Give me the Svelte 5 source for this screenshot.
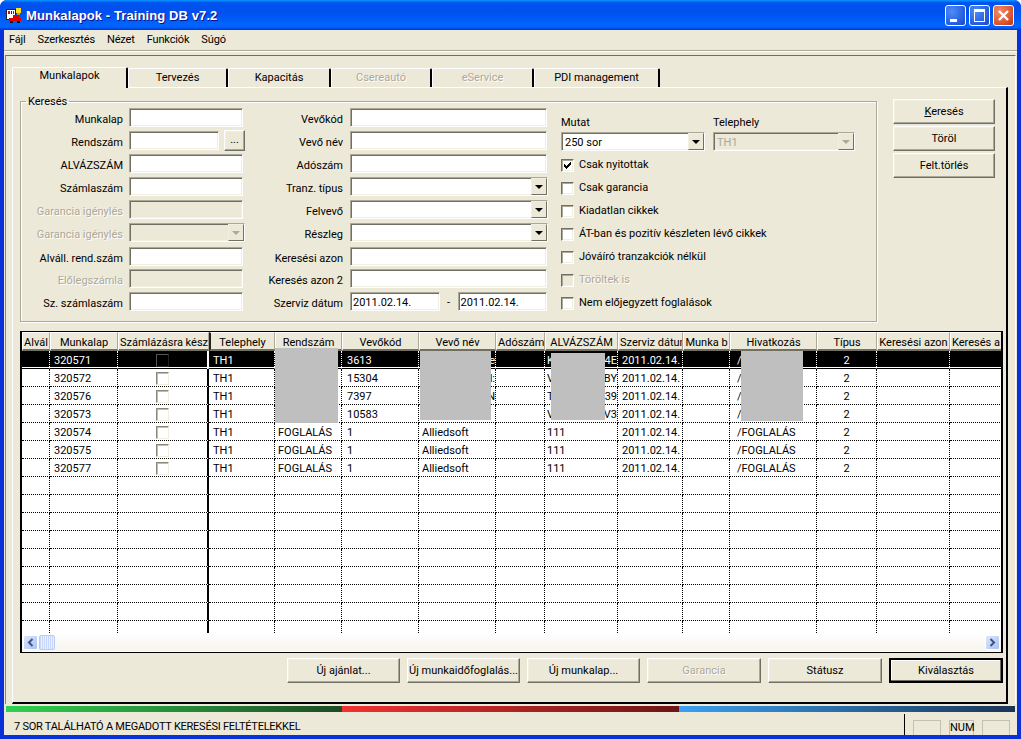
<script>
  const menus = ['Fájl', 'Szerkesztés', 'Nézet', 'Funkciók', 'Súgó'];

  const tabs = [
    { label: 'Munkalapok', width: 116, active: true },
    { label: 'Tervezés', width: 100 },
    { label: 'Kapacitás', width: 103 },
    { label: 'Csereautó', width: 101, disabled: true },
    { label: 'eService', width: 102, disabled: true },
    { label: 'PDI management', width: 126 }
  ];

  const leftFields = [
    { label: 'Munkalap' },
    { label: 'Rendszám', browse: true },
    { label: 'ALVÁZSZÁM' },
    { label: 'Számlaszám' },
    { label: 'Garancia igénylés', disabled: true },
    { label: 'Garancia igénylés', disabled: true, combo: true },
    { label: 'Alváll. rend.szám', shift: true },
    { label: 'Előlegszámla', disabled: true },
    { label: 'Sz. számlaszám' }
  ];

  const middleFields = [
    { label: 'Vevőkód' },
    { label: 'Vevő név' },
    { label: 'Adószám' },
    { label: 'Tranz. típus', combo: true },
    { label: 'Felvevő', combo: true },
    { label: 'Részleg', combo: true },
    { label: 'Keresési azon', shift: true },
    { label: 'Keresés azon 2' }
  ];

  const checks = [
    { label: 'Csak nyitottak', checked: true },
    { label: 'Csak garancia' },
    { label: 'Kiadatlan cikkek' },
    { label: 'ÁT-ban és pozitív készleten lévő cikkek' },
    { label: 'Jóváíró tranzakciók nélkül' },
    { label: 'Töröltek is', disabled: true },
    { label: 'Nem előjegyzett foglalások' }
  ];

  const columns = [
    { title: 'Alvál', width: 28 },
    { title: 'Munkalap', width: 68 },
    { title: 'Számlázásra kész', width: 91 },
    { title: 'Telephely', width: 66 },
    { title: 'Rendszám', width: 67 },
    { title: 'Vevőkód', width: 77 },
    { title: 'Vevő név', width: 77 },
    { title: 'Adószám', width: 49 },
    { title: 'ALVÁZSZÁM', width: 73 },
    { title: 'Szerviz dátum', width: 65 },
    { title: 'Munka b', width: 47 },
    { title: 'Hivatkozás', width: 87 },
    { title: 'Típus', width: 60 },
    { title: 'Keresési azon', width: 73 },
    { title: 'Keresés a', width: 52 }
  ];

  const date = '2011.02.14.';
  const rows = [
    { id: '320571', rendszam: '', vevokod: '3613', nevEnd: 'ne', alvStart: 'K', alvEnd: '04E', hiv: '/', selected: true },
    { id: '320572', rendszam: '', vevokod: '15304', nevEnd: 'l:', alvStart: 'V', alvEnd: 'BY', hiv: '/' },
    { id: '320576', rendszam: '', vevokod: '7397', nevEnd: 'N', alvStart: 'T', alvEnd: '39', hiv: '/' },
    { id: '320573', rendszam: '', vevokod: '10583', nevEnd: '', alvStart: 'V', alvEnd: 'WV3', hiv: '/' },
    { id: '320574', rendszam: 'FOGLALÁS', vevokod: '1', nev: 'Alliedsoft', alvStart: '111', alvEnd: '', hiv: '/FOGLALÁS' },
    { id: '320575', rendszam: 'FOGLALÁS', vevokod: '1', nev: 'Alliedsoft', alvStart: '111', alvEnd: '', hiv: '/FOGLALÁS' },
    { id: '320577', rendszam: 'FOGLALÁS', vevokod: '1', nev: 'Alliedsoft', alvStart: '111', alvEnd: '', hiv: '/FOGLALÁS' }
  ];
  const blankRows = Array(9).fill(0);

  const footerButtons = [
    { label: 'Új ajánlat...', width: 113 },
    { label: 'Új munkaidőfoglalás...', width: 113 },
    { label: 'Új munkalap...', width: 113 },
    { label: 'Garancia', width: 114, disabled: true },
    { label: 'Státusz', width: 114 },
    { label: 'Kiválasztás', width: 114, primary: true }
  ];
</script>

<div class="window">
  <header class="titlebar">
    <svg class="appicon" width="16" height="15" viewBox="0 0 16 15" shape-rendering="crispEdges">
      <rect x="0" y="1" width="10" height="11" fill="#222" />
      <rect x="1" y="2" width="8" height="9" fill="#fff" />
      <rect x="2" y="3" width="2" height="3" fill="#d01010" />
      <rect x="5" y="3" width="1" height="3" fill="#222" />
      <rect x="7" y="3" width="1" height="3" fill="#d01010" />
      <rect x="10" y="0" width="5" height="5" fill="#ffe020" />
      <rect x="11" y="5" width="3" height="2" fill="#c8a000" />
      <rect x="7" y="7" width="6" height="3" fill="#e00000" />
      <rect x="3" y="10" width="12" height="3" fill="#e00000" />
      <rect x="4" y="13" width="3" height="2" fill="#111" />
      <rect x="11" y="13" width="3" height="2" fill="#111" />
    </svg>
    <span class="title">Munkalapok - Training DB v7.2</span>
    <div class="caption-buttons">
      <button class="cap" aria-label="Kis méret">
        <svg width="19" height="19" viewBox="0 0 19 19" shape-rendering="crispEdges"><rect x="4" y="13" width="7" height="3" fill="#fff" /></svg>
      </button>
      <button class="cap" aria-label="Teljes méret">
        <svg width="19" height="19" viewBox="0 0 19 19" shape-rendering="crispEdges"><path d="M4 3h11v13H4z M5 6v9h9V6z" fill="#fff" fill-rule="evenodd" /></svg>
      </button>
      <button class="cap close" aria-label="Bezárás">
        <svg width="19" height="19" viewBox="0 0 19 19"><path d="M5 5l9 9M14 5l-9 9" stroke="#fff" stroke-width="2.4" /></svg>
      </button>
    </div>
  </header>

  <div class="client">
    <nav class="menubar">
      {#each menus as m}<span>{m}</span>{/each}
    </nav>
    <div class="menu-rule"></div>

    <div class="frame">
      <div class="tabstrip">
        {#each tabs as t}
          <div class="tab" class:active={t.active} class:off={t.disabled} style="width: {t.width}px">{t.label}</div>
        {/each}
      </div>

      <div class="page">
        <div class="top-area">
          <fieldset class="group">
            <legend>Keresés</legend>
            <div class="col left">
              {#each leftFields as f}
                <div class="label" class:off={f.disabled} class:shift={f.shift}>{f.label}</div>
                <div class="control" class:shift={f.shift}>
                  {#if f.browse}
                    <div class="edit short"></div>
                    <div class="btn browse">...</div>
                  {:else if f.combo}
                    <div class="edit grow off wide">
                      <div class="arrow off"><i></i></div>
                    </div>
                  {:else}
                    <div class="edit grow" class:off={f.disabled}></div>
                  {/if}
                </div>
              {/each}
            </div>

            <div class="col middle">
              {#each middleFields as f}
                <div class="label" class:shift={f.shift}>{f.label}</div>
                <div class="control" class:shift={f.shift}>
                  <div class="edit grow" class:wider={f.combo}>
                    {#if f.combo}<div class="arrow"><i></i></div>{/if}
                  </div>
                </div>
              {/each}
              <div class="label">Szerviz dátum</div>
              <div class="control dates">
                <div class="edit grow">{date}</div>
                <span class="dash">-</span>
                <div class="edit grow">{date}</div>
              </div>
            </div>

            <div class="col right">
              <div class="pickers">
                <div class="picker">
                  <div class="caption">Mutat</div>
                  <div class="edit">250 sor<div class="arrow"><i></i></div></div>
                </div>
                <div class="picker small">
                  <div class="caption">Telephely</div>
                  <div class="edit off">TH1<div class="arrow off"><i></i></div></div>
                </div>
              </div>
              {#each checks as c}
                <div class="check" class:off={c.disabled}>
                  <span class="box">
                    {#if c.checked}
                      <svg width="9" height="9" viewBox="0 0 9 9" shape-rendering="crispEdges"><path d="M1 3h1v1h1v1h1V4h1V3h1V2h1V1h1v2H8v1H7v1H6v1H5v1H4v1H3V7H2V6H1z" fill="#000" /></svg>
                    {/if}
                  </span>
                  <span class="check-label">{c.label}</span>
                </div>
              {/each}
            </div>
          </fieldset>

          <div class="side-buttons">
            <div class="btn"><span><u>K</u>eresés</span></div>
            <div class="btn">Töröl</div>
            <div class="btn">Felt.törlés</div>
          </div>
        </div>

        <div class="list">
          <div class="grid">
            <table>
              <colgroup>
                {#each columns as c}<col style="width: {c.width}px" />{/each}
              </colgroup>
              <thead>
                <tr>
                  {#each columns as c}<th>{c.title}</th>{/each}
                </tr>
              </thead>
              <tbody>
                {#each rows as r}
                  <tr class:selected={r.selected}>
                    <td></td>
                    <td>{r.id}</td>
                    <td class="center"><span class="cell-check"></span></td>
                    <td>TH1</td>
                    <td>{r.rendszam}</td>
                    <td>{r.vevokod}</td>
                    <td class:tail={r.nevEnd}>{r.nev ?? r.nevEnd}</td>
                    <td></td>
                    <td><div class="split"><span>{r.alvStart}</span><span>{r.alvEnd}</span></div></td>
                    <td>{date}</td>
                    <td></td>
                    <td>{r.hiv}</td>
                    <td class="center">2</td>
                    <td></td>
                    <td></td>
                  </tr>
                {/each}
                {#each blankRows as _}
                  <tr>
                    {#each columns as c}<td></td>{/each}
                  </tr>
                {/each}
              </tbody>
            </table>
            <div class="mask m1"></div>
            <div class="mask m2"></div>
            <div class="mask m3"></div>
            <div class="mask m4"></div>
          </div>
          <div class="hscroll">
            <div class="sbtn">
              <svg width="9" height="9" viewBox="0 0 9 9"><path d="M6.5 1L3 4.5 6.5 8" fill="none" stroke="#3f5480" stroke-width="2" /></svg>
            </div>
            <div class="thumb"></div>
            <div class="track"></div>
            <div class="sbtn">
              <svg width="9" height="9" viewBox="0 0 9 9"><path d="M2.5 1L6 4.5 2.5 8" fill="none" stroke="#3f5480" stroke-width="2" /></svg>
            </div>
          </div>
        </div>

        <div class="footer-buttons">
          {#each footerButtons as b}
            <div class="btn" class:off={b.disabled} class:primary={b.primary} style="width: {b.width}px">{b.label}</div>
          {/each}
        </div>
      </div>
    </div>

    <div class="progress">
      <div class="seg green"></div>
      <div class="seg red"></div>
      <div class="seg blue"></div>
    </div>

    <footer class="status">
      <div class="status-text">7 SOR TALÁLHATÓ A MEGADOTT KERESÉSI FELTÉTELEKKEL</div>
      <div class="panes">
        <div class="pane wide"></div>
        <div class="pane num">NUM</div>
        <div class="pane wide"></div>
      </div>
    </footer>
  </div>
</div>

<style>
  :global(body) {
    margin: 0;
    background: #fff;
  }

  .window {
    width: 1021px;
    height: 739px;
    display: flex;
    flex-direction: column;
    overflow: hidden;
    background: #0831d9;
    border-radius: 7px 7px 0 0;
    font-family: Roboto, 'Liberation Sans', Arial, sans-serif;
    font-size: 11px;
    color: #000;
    box-sizing: border-box;
  }

  .titlebar {
    height: 30px;
    flex: none;
    display: flex;
    align-items: center;
    padding: 0 7px 0 6px;
    background: linear-gradient(180deg, #0997ff 0, #0053ee 9%, #0050ee 40%, #0066ff 85%, #005bff 93%, #003dd7 97%, #003dd7 100%);
  }

  .appicon {
    flex: none;
    margin-right: 4px;
  }

  .title {
    font-family: 'Liberation Sans', Arial, sans-serif;
    font-weight: 700;
    font-size: 13px;
    letter-spacing: 0.1px;
    color: #fff;
    text-shadow: 1px 1px 0 #0f1089;
  }

  .caption-buttons {
    margin-left: auto;
    display: flex;
    gap: 3px;
  }

  .cap {
    width: 21px;
    height: 21px;
    padding: 0;
    display: flex;
    align-items: center;
    justify-content: center;
    border: 1px solid #fff;
    border-radius: 3px;
    background: radial-gradient(circle at 30% 30%, #4f8cf6 0, #2a62e2 60%, #1c45c4 100%);
  }

  .cap.close {
    background: radial-gradient(circle at 30% 30%, #ec8d6e 0, #dc5a32 60%, #b8340f 100%);
  }

  .client {
    flex: 1;
    min-height: 0;
    margin: 0 4px 4px;
    display: flex;
    flex-direction: column;
    background: #ece9d8;
  }

  .menubar {
    height: 19px;
    padding-bottom: 1px;
    flex: none;
    display: flex;
    align-items: center;
    gap: 12px;
    padding-left: 5px;
    letter-spacing: -0.15px;
  }

  .menu-rule {
    height: 1px;
    flex: none;
    background: #aca899;
    border-bottom: 1px solid #fff;
  }

  .frame {
    flex: none;
    height: 649px;
    margin: 3px 1px 0;
    border-top: 1px solid #716f64;
    border-left: 1px solid #8b8878;
    border-right: 1px solid #fff;
    box-sizing: border-box;
    padding: 12px 7px 0 6px;
    display: flex;
    flex-direction: column;
  }

  .tabstrip {
    display: flex;
    height: 19px;
    flex: none;
    align-items: flex-end;
    position: relative;
    z-index: 1;
  }

  .tab {
    height: 19px;
    box-sizing: border-box;
    display: flex;
    align-items: center;
    justify-content: center;
    padding-bottom: 1px;
    border-top: 1px solid #fff;
    border-left: 1px solid #fff;
    border-right: 2px solid #000;
    border-radius: 2px 2px 0 0;
    background: #ece9d8;
  }

  .tab.active {
    height: 21px;
    margin-top: -2px;
    margin-bottom: -1px;
    padding-bottom: 6px;
  }

  .tab.off {
    color: #aca899;
    text-shadow: 1px 1px 0 #fff;
  }

  .page {
    flex: 1;
    min-height: 0;
    border-top: 1px solid #fff;
    border-left: 1px solid #fff;
    border-right: 2px solid #000;
    border-bottom: 2px solid #000;
    padding: 11px 4px 0 7px;
    display: flex;
    flex-direction: column;
    box-sizing: border-box;
  }

  .top-area {
    display: flex;
    align-items: flex-start;
    gap: 16px;
    height: 232px;
    flex: none;
  }

  .group {
    width: 857px;
    height: 227px;
    margin: -4px 0 0;
    box-sizing: border-box;
    border: 1px solid #aca899;
    box-shadow: 1px 1px 0 #fff, inset 1px 1px 0 #fff;
    padding: 0;
    display: flex;
    flex: none;
  }

  legend {
    margin-left: 5px;
    padding: 0 2px;
    line-height: 13px;
  }

  .col {
    box-sizing: border-box;
  }

  .col.left,
  .col.middle {
    display: grid;
    grid-auto-rows: 19px;
    row-gap: 4px;
    align-items: center;
  }

  .col.left {
    grid-template-columns: 102px 114px;
    column-gap: 6px;
  }

  .col.middle {
    grid-template-columns: 100px 197px;
    column-gap: 7px;
  }

  .col.right {
    margin-left: 14px;
    margin-top: 8px;
  }

  .shift {
    position: relative;
    top: 1px;
  }

  .label {
    text-align: right;
    white-space: nowrap;
    padding-top: 3px;
  }

  .label.off,
  .check.off,
  .btn.off {
    color: #aca899;
    text-shadow: 1px 1px 0 #fff;
  }

  .control {
    display: flex;
    align-items: center;
    height: 19px;
    gap: 5px;
  }

  .edit {
    height: 19px;
    box-sizing: border-box;
    background: #fff;
    border: 1px solid;
    border-color: #aca899 #fff #fff #aca899;
    box-shadow: inset 1px 1px 0 #716f64, inset -1px -1px 0 #f1efe2;
    padding: 2px 17px 0 3px;
    line-height: 15px;
    position: relative;
    white-space: nowrap;
    overflow: hidden;
  }

  .edit.off {
    background: #ece9d8;
    color: #aca899;
  }

  .edit.grow {
    flex: 1;
  }

  .edit.wide {
    margin-right: -2px;
  }

  .edit.wider {
    margin-right: -1px;
  }

  .edit.short {
    width: 90px;
    flex: none;
  }

  .arrow {
    position: absolute;
    top: 0;
    right: 0;
    width: 16px;
    height: 17px;
    box-sizing: border-box;
    background: #ece9d8;
    border: 1px solid;
    border-color: #f1efe2 #716f64 #716f64 #f1efe2;
    display: flex;
    align-items: center;
    justify-content: center;
  }

  .arrow i {
    width: 0;
    height: 0;
    border-left: 4px solid transparent;
    border-right: 4px solid transparent;
    border-top: 4px solid #000;
    margin-top: 1px;
  }

  .arrow.off i {
    border-top-color: #aca899;
  }

  .dates {
    gap: 0;
  }

  .dates .edit {
    padding: 2px 2px 0 2px;
  }

  .dash {
    width: 18px;
    text-align: center;
    padding-top: 2px;
  }

  .pickers {
    display: flex;
    gap: 8px;
    margin-bottom: 8px;
  }

  .picker {
    width: 144px;
  }

  .picker.small {
    width: 142px;
  }

  .caption {
    height: 16px;
    line-height: 13px;
  }

  .check {
    display: flex;
    align-items: center;
    height: 13px;
    gap: 5px;
    margin-bottom: 10px;
    white-space: nowrap;
  }

  .check-label {
    margin-top: -2px;
  }

  .box {
    width: 13px;
    height: 13px;
    box-sizing: border-box;
    flex: none;
    background: #fff;
    border: 1px solid;
    border-color: #716f64 #fff #fff #716f64;
    box-shadow: inset 1px 1px 0 #aca899, inset -1px -1px 0 #f1efe2;
    display: flex;
    align-items: center;
    justify-content: center;
  }

  .check.off .box {
    background: #ece9d8;
  }

  .side-buttons {
    display: flex;
    flex-direction: column;
    gap: 2px;
    width: 102px;
  }

  .btn {
    height: 25px;
    box-sizing: border-box;
    display: flex;
    align-items: center;
    justify-content: center;
    background: #ece9d8;
    border: 1px solid;
    border-color: #fff #716f64 #716f64 #fff;
    box-shadow: inset -1px -1px 0 #aca899, inset 1px 1px 0 #f1efe2;
    white-space: nowrap;
  }

  .btn.browse {
    width: 21px;
    height: 21px;
    flex: none;
    padding-bottom: 3px;
  }

  .btn.primary {
    border: 2px solid #000;
    box-shadow: inset -1px -1px 0 #716f64, inset 1px 1px 0 #fff;
  }

  .list {
    width: 983px;
    height: 322px;
    flex: none;
    box-sizing: border-box;
    border: solid #000;
    border-width: 1px 2px 1px 2px;
    background: #fff;
    display: flex;
    flex-direction: column;
  }

  .grid {
    height: 301px;
    flex: none;
    overflow: hidden;
    position: relative;
  }

  table {
    border-collapse: separate;
    border-spacing: 0;
    table-layout: fixed;
    width: 980px;
  }

  th {
    height: 19px;
    padding: 2px 1px 0;
    box-sizing: border-box;
    font-weight: 400;
    white-space: nowrap;
    overflow: hidden;
    background: #ece9d8;
    border-top: 1px solid #fff;
    border-left: 1px solid #fff;
    border-right: 1px solid #aca899;
    border-bottom: 2px solid #716f64;
  }

  th:nth-child(4) {
    border-left: 2px solid #222;
  }

  td {
    height: 18px;
    padding: 2px 0 0 4px;
    box-sizing: border-box;
    white-space: nowrap;
    overflow: hidden;
    border-right: 1px dotted #000;
    border-bottom: 1px dotted #000;
  }

  td:nth-child(3) {
    border-right: 2px solid #000;
  }

  td:nth-child(5),
  td:nth-child(7) {
    padding-left: 3px;
  }

  td:nth-child(6) {
    padding-left: 5px;
  }

  td:nth-child(9) {
    padding-left: 2px;
  }

  td:nth-child(12) {
    padding-left: 7px;
  }

  td.center {
    padding: 2px 0 0;
    text-align: center;
  }

  td.tail {
    text-align: right;
    padding: 2px 0 0;
  }

  .split {
    display: flex;
    justify-content: space-between;
    overflow: hidden;
  }

  tr.selected td {
    color: #fff;
    background: linear-gradient(#000 16px, #fff 16px);
    border-right-color: #fff;
  }

  .cell-check {
    display: inline-block;
    vertical-align: middle;
    width: 11px;
    height: 11px;
    margin-top: -2px;
    border: 1px solid;
    border-color: #8a8878 #f1efe2 #f1efe2 #8a8878;
    box-shadow: inset 1px 1px 0 #c0bdae;
  }

  tr.selected .cell-check {
    border-color: #555 #222 #222 #555;
    box-shadow: none;
  }

  .mask {
    position: absolute;
    background: #bfbfbf;
  }

  .m1 { left: 253px; top: 16px; width: 63px; height: 75px; }
  .m2 { left: 398px; top: 19px; width: 71px; height: 69px; }
  .m3 { left: 529px; top: 21px; width: 54px; height: 67px; }
  .m4 { left: 719px; top: 19px; width: 62px; height: 70px; }

  .hscroll {
    height: 18px;
    flex: none;
    display: flex;
    align-items: center;
    gap: 1px;
    padding: 0 1px;
    background: linear-gradient(180deg, #fff 0, #f6f4ec 100%);
  }

  .sbtn {
    width: 15px;
    height: 15px;
    flex: none;
    box-sizing: border-box;
    border: 1px solid #fff;
    border-radius: 2px;
    background: linear-gradient(135deg, #dbe6fd, #a9c3f6);
    display: flex;
    align-items: center;
    justify-content: center;
  }

  .thumb {
    width: 16px;
    height: 15px;
    flex: none;
    box-sizing: border-box;
    border: 1px solid #b9ccf7;
    border-radius: 2px;
    background: repeating-linear-gradient(90deg, #c9d8fa 0 1px, #e9effd 1px 2px);
  }

  .track {
    flex: 1;
  }

  .footer-buttons {
    display: flex;
    gap: 7px;
    justify-content: flex-end;
    margin-top: 5px;
    width: 983px;
  }

  .progress {
    display: flex;
    height: 6px;
    flex: none;
    margin: 2px 2px 0;
  }

  .seg {
    flex: 1;
  }

  .green { background: linear-gradient(90deg, #2fd24f, #1d4a25); }
  .red { background: linear-gradient(90deg, #f23232, #6d1515); }
  .blue { background: linear-gradient(90deg, #3aa0f2, #1a3456); }

  .status {
    flex: 1;
    min-height: 0;
    display: flex;
    align-items: flex-end;
    background: #ece9d8;
  }

  .status-text {
    flex: 1;
    padding: 0 0 1px 10px;
    line-height: 15px;
    letter-spacing: -0.25px;
  }

  .panes {
    display: flex;
    gap: 8px;
    height: 21px;
    border-left: 1px solid #000;
    padding: 6px 7px 0 8px;
    box-sizing: border-box;
  }

  .pane {
    height: 15px;
    box-sizing: border-box;
    border: 1px solid #c4c1b2;
    border-bottom: none;
    line-height: 14px;
    text-align: center;
  }

  .pane.wide { width: 28px; }
  .pane.num { width: 25px; }
</style>
